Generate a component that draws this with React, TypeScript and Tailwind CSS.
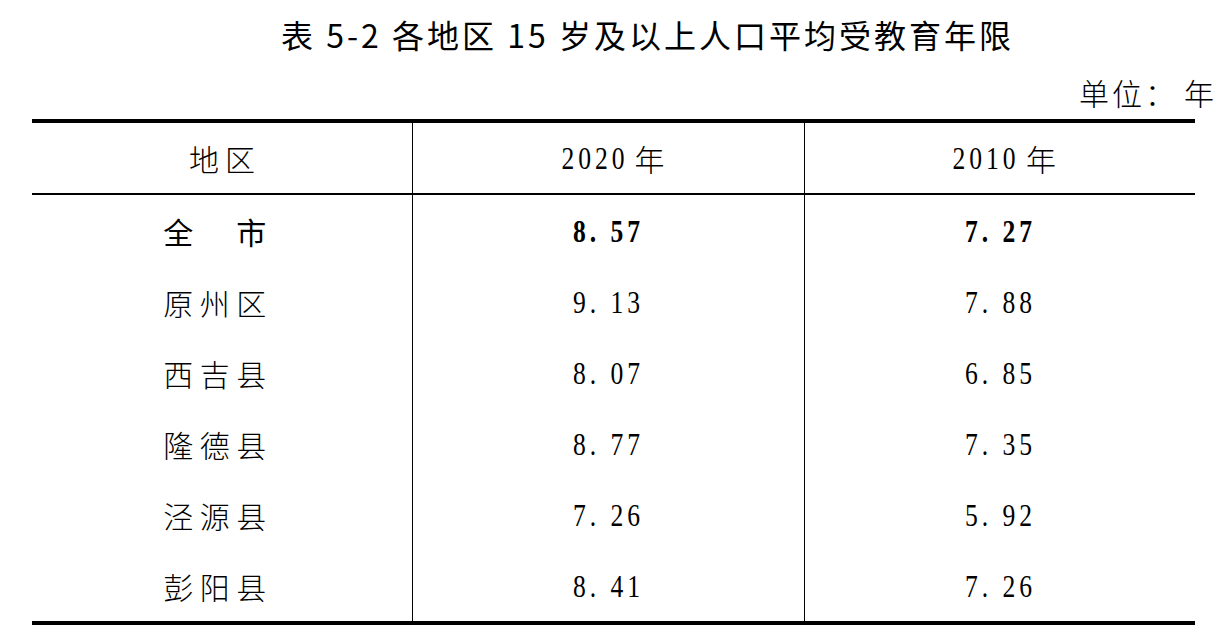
import React from "react";

const CJK = "font-['Noto_Sans_CJK_SC',sans-serif]";

function Num({ text, bold = false }: { text: string; bold?: boolean }) {
  return (
    <span
      className={`inline-block origin-center scale-x-[0.8] font-['Liberation_Serif',serif] text-[32px] leading-none tracking-[5px] text-black ${
        bold ? "font-bold" : "font-normal"
      }`}
    >
      {text}
    </span>
  );
}

const rows = [
  { name: "全　市", a: "8. 57", b: "7. 27", bold: true },
  { name: "原州区", a: "9. 13", b: "7. 88" },
  { name: "西吉县", a: "8. 07", b: "6. 85" },
  { name: "隆德县", a: "8. 77", b: "7. 35" },
  { name: "泾源县", a: "7. 26", b: "5. 92" },
  { name: "彭阳县", a: "8. 41", b: "7. 26" },
];

export default function App() {
  return (
    <div className="w-[1225px] h-[631px] bg-white text-black overflow-hidden">
      <div className="pt-[14px] pl-[70px] flex justify-center">
        <div className={`${CJK} h-[40px] flex items-center text-[32px] leading-none tracking-[3px] font-normal`}>
          表 5-2 各地区 15 岁及以上人口平均受教育年限
        </div>
      </div>
      <div className="mt-[23px] flex justify-end pr-[8px]">
        <div className={`${CJK} h-[30px] flex items-center text-[30px] leading-none font-light tracking-[3px]`}>
          单位：<span className="ml-[6px]">年</span>
        </div>
      </div>
      <div className="mt-[12px] ml-[32px] w-[1163px] border-t-4 border-b-4 border-black">
        <div className="grid grid-cols-[381px_392px_390px] h-[72px] border-b-2 border-black">
          <div className="border-r border-black flex items-center justify-center">
            <span className={`${CJK} text-[30px] leading-none font-light tracking-[6px] pl-[6px]`}>地区</span>
          </div>
          <div className="border-r border-black flex items-center justify-center">
            <Num text="2020" />
            <span className={`${CJK} text-[30px] leading-none font-light -ml-[2px]`}>年</span>
          </div>
          <div className="flex items-center justify-center">
            <Num text="2010" />
            <span className={`${CJK} text-[30px] leading-none font-light -ml-[2px]`}>年</span>
          </div>
        </div>
        {rows.map((r) => (
          <div key={r.name} className="grid grid-cols-[381px_392px_390px] h-[71px]">
            <div className="border-r border-black flex items-center justify-center">
              <span
                className={`${CJK} text-[30px] leading-none tracking-[6.5px] pr-[8px] ${
                  r.bold ? "font-normal" : "font-light"
                }`}
              >
                {r.name}
              </span>
            </div>
            <div className="border-r border-black flex items-center justify-center">
              <Num text={r.a} bold={r.bold} />
            </div>
            <div className="flex items-center justify-center">
              <Num text={r.b} bold={r.bold} />
            </div>
          </div>
        ))}
      </div>
    </div>
  );
}
